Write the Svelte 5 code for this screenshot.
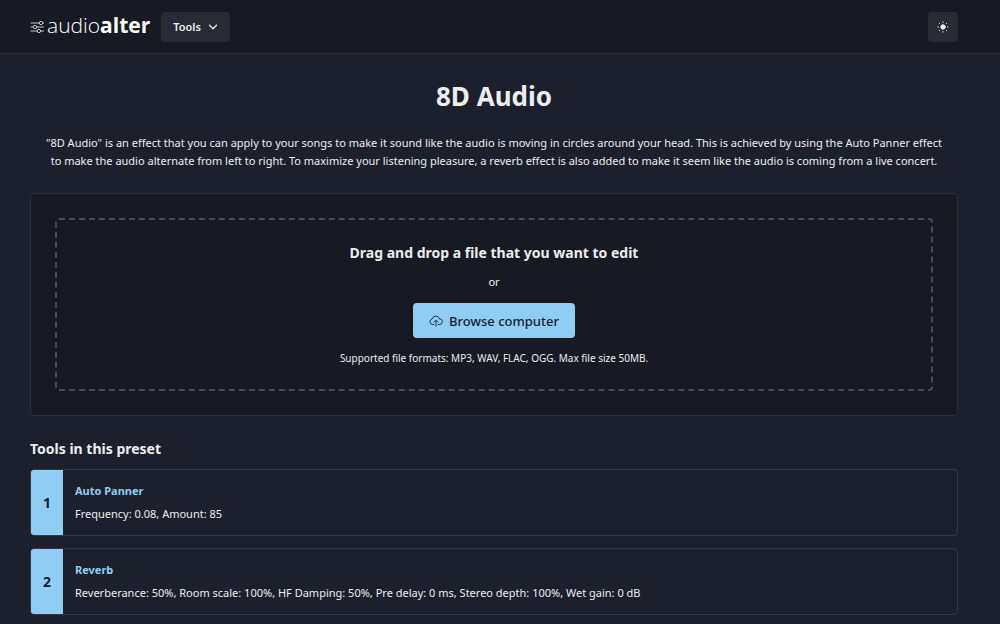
<script lang="ts">
  type Tool = { name: string; settings: string };

  const tools: Tool[] = [
    { name: "Auto Panner", settings: "Frequency: 0.08, Amount: 85" },
    {
      name: "Reverb",
      settings:
        "Reverberance: 50%, Room scale: 100%, HF Damping: 50%, Pre delay: 0 ms, Stereo depth: 100%, Wet gain: 0 dB",
    },
  ];

  let fileInput: HTMLInputElement;
</script>

<header>
  <a class="logo" href="/" aria-label="audioalter">
    <svg width="14" height="14" viewBox="0 0 14 14" aria-hidden="true">
      <path d="M1 3H9M13 3H13.5M1 7H3M7 7H13.5M1 11H7M11 11H13.5" />
      <circle cx="11" cy="3" r="1.7" />
      <circle cx="5" cy="7" r="1.7" />
      <circle cx="9" cy="11" r="1.7" />
    </svg>
    <span class="wordmark">audio<b>alter</b></span>
  </a>
  <button class="nav-button" type="button">
    Tools
    <svg width="10" height="10" viewBox="0 0 10 10" aria-hidden="true">
      <path d="M1.5 3.2L5 6.7L8.5 3.2" stroke-width="1.3" />
    </svg>
  </button>
  <button class="nav-button theme" type="button" aria-label="Toggle theme">
    <svg width="12" height="12" viewBox="0 0 12 12" aria-hidden="true">
      <circle cx="6" cy="6" r="2.2" />
      <path d="M6 .9V1.4M6 10.6V11.1M.9 6H1.4M10.6 6H11.1M2.3 2.3L2.6 2.6M9.4 9.4L9.7 9.7M2.3 9.7L2.6 9.4M9.4 2.6L9.7 2.3" />
    </svg>
  </button>
</header>

<main>
  <h1>8D Audio</h1>
  <p class="intro">
    "8D Audio" is an effect that you can apply to your songs to make it sound like the audio is
    moving in circles around your head. This is achieved by using the Auto Panner effect to make the
    audio alternate from left to right. To maximize your listening pleasure, a reverb effect is also
    added to make it seem like the audio is coming from a live concert.
  </p>

  <section class="upload">
    <div class="dropzone">
      <h2>Drag and drop a file that you want to edit</h2>
      <p class="or">or</p>
      <input type="file" hidden bind:this={fileInput} aria-label="Audio file" />
      <button class="browse" type="button" onclick={() => fileInput.click()}>
        <svg width="14" height="14" viewBox="0 0 16 16" aria-hidden="true">
          <path d="M5.5 12H4a3.2 3.2 0 0 1-.5-6.3A4.4 4.4 0 0 1 12 5.6A3.2 3.2 0 0 1 12.2 12H10.5" />
          <path d="M8 14V7.2M5.7 9.4L8 7.1L10.3 9.4" />
        </svg>
        Browse computer
      </button>
      <p class="formats">Supported file formats: MP3, WAV, FLAC, OGG. Max file size 50MB.</p>
    </div>
  </section>

  <h2>Tools in this preset</h2>
  <ol>
    {#each tools as tool, i (tool.name)}
      <li>
        <span class="step">{i + 1}</span>
        <div class="details">
          <a href="/">{tool.name}</a>
          <p>{tool.settings}</p>
        </div>
      </li>
    {/each}
  </ol>
</main>

<style>
  :global(body) {
    background: #1c202c;
    color: #ededee;
    font-family: "Segoe UI", "Noto Sans", "Open Sans", sans-serif;
    font-size: 11px;
    line-height: 18px;
  }
  h1,
  h2,
  p {
    margin: 0;
  }
  button {
    border: 0;
    border-radius: 4px;
    font-family: inherit;
    font-weight: 600;
    cursor: pointer;
  }
  a {
    text-decoration: none;
  }
  svg {
    fill: none;
    stroke: currentColor;
    stroke-linecap: round;
    stroke-linejoin: round;
    flex-shrink: 0;
  }
  header {
    display: flex;
    align-items: center;
    gap: 11px;
    height: 53px;
    padding: 0 42px 0 30px;
    background: #171923;
    border-bottom: 1px solid #2c303b;
  }
  .logo {
    display: flex;
    align-items: center;
    gap: 3px;
    color: #fff;
  }
  .logo svg {
    stroke: #c8c9cc;
  }
  .wordmark {
    padding-bottom: 4px;
    font-family: "Open Sans", "Noto Sans", sans-serif;
    font-size: 21px;
    line-height: 28px;
    font-weight: 350;
  }
  .wordmark b {
    font-weight: 700;
  }
  .nav-button {
    display: flex;
    align-items: center;
    gap: 7px;
    height: 30px;
    padding: 0 12px;
    background: #282b34;
    color: #ededee;
    font-size: 11px;
  }
  .theme {
    justify-content: center;
    width: 30px;
    margin-left: auto;
    padding: 0;
  }
  .theme circle {
    fill: currentColor;
  }
  main {
    padding: 24px 42px 9px 30px;
  }
  h1 {
    font-size: 26px;
    line-height: 36px;
    text-align: center;
  }
  .intro {
    margin: 20px 0 23px;
    padding: 0 12px;
    text-align: center;
  }
  h2 {
    font-size: 14px;
    line-height: 20px;
  }
  .upload {
    margin-bottom: 23px;
    padding: 24px;
    background: #171923;
    border: 1px solid #2d313c;
    border-radius: 4px;
  }
  .dropzone {
    display: flex;
    flex-direction: column;
    align-items: center;
    padding: 23px 24px;
    border: 2px dashed #434d5f;
    border-radius: 4px;
    text-align: center;
  }
  .or {
    margin: 10px 0 12px;
  }
  .browse {
    display: flex;
    align-items: center;
    gap: 6px;
    height: 35px;
    padding: 0 16px;
    background: #90cdf4;
    color: #1a202c;
    font-size: 13px;
    font-weight: 500;
  }
  .formats {
    margin-top: 12px;
    font-size: 10px;
    line-height: 16px;
  }
  ol {
    display: grid;
    gap: 12px;
    margin: 10px 0 0;
    padding: 0;
    list-style: none;
  }
  li {
    display: flex;
    border: 1px solid #343944;
    border-radius: 4px;
    overflow: hidden;
  }
  .step {
    display: flex;
    align-items: center;
    justify-content: center;
    width: 32px;
    flex-shrink: 0;
    background: #90cdf4;
    color: #1a202c;
    font-size: 14px;
    font-weight: 700;
  }
  .details {
    padding: 12px;
  }
  .details a {
    display: block;
    margin-bottom: 5px;
    color: #90cdf4;
    font-weight: 700;
  }
</style>
